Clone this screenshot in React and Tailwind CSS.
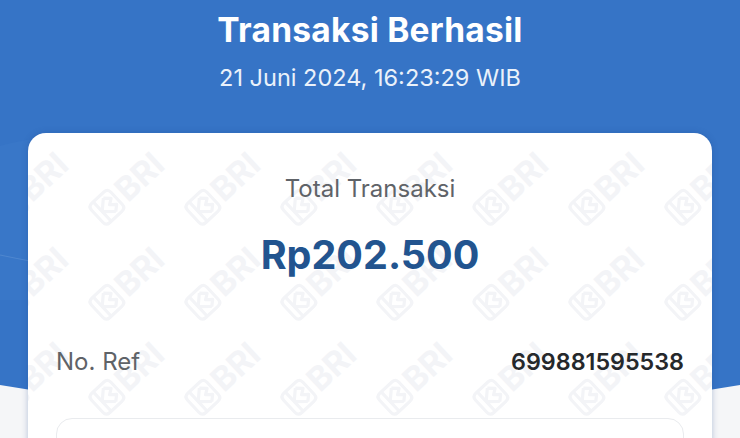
import React from 'react';

const BriMark = () => (
  <div className="flex w-[100px] shrink-0 -rotate-[43deg] items-center justify-center gap-[3px] text-[#f3f4f7]">
    <svg className="shrink-0" width="31" height="31" viewBox="0 0 34 34" fill="none" stroke="currentColor" strokeWidth="3.5" strokeLinejoin="round">
      <path d="M8 2.5H26Q31.5 2.5 31.5 8V26Q31.5 31.5 26 31.5H8Q2.5 31.5 2.5 26V8Q2.5 2.5 8 2.5Z" />
      <path d="M10 2.5V31.5M10 17L21 7M10 17L21 27M21 7L27 13L21 17L27 22L21 27" />
    </svg>
    <span className="text-[33px] font-bold leading-none">BRI</span>
  </div>
);

const Watermark = () => (
  <div className="absolute left-[-45px] top-[-87px] grid grid-cols-[repeat(8,96px)] auto-rows-[95px]">
    {Array.from({ length: 32 }).map((_, i) => (
      <div key={i} className="flex items-center justify-center">
        <BriMark />
      </div>
    ))}
  </div>
);

const App = () => {
  return (
    <div className="relative h-[438px] w-[740px] overflow-hidden bg-[#f5f6f8] font-['Inter',sans-serif]">
      <svg className="absolute inset-0" width="740" height="438" viewBox="0 0 740 438">
        <path d="M0 0H740V385Q370 450 0 385Z" fill="#3674c6" />
        <path d="M0 146Q20 140 60 135V300H0V255Z" fill="#3977c8" />
        <path d="M0 255Q14 258 30 261" fill="none" stroke="#4f87cf" strokeWidth="1.2" />
      </svg>

      <div className="relative flex flex-col items-center">
        <h1 className="mt-[10px] text-[33.5px] font-bold leading-[40px] tracking-[0.25px] text-white">Transaksi Berhasil</h1>
        <p className="mt-[10px] text-[23.5px] leading-[36px] text-[#eaf1fa]">21 Juni 2024, 16:23:29 WIB</p>

        <div className="relative mt-[37px] h-[400px] w-[684px] overflow-hidden rounded-[18px] bg-white shadow-[0_0_6px_rgba(30,70,140,0.3)]">
          <Watermark />
          <div className="relative flex flex-col px-7">
            <p className="mt-[42px] text-center text-[24px] leading-7 text-[#5f6368]">Total Transaksi</p>
            <p className="mt-[28px] text-center text-[39.5px] font-bold leading-[48px] text-[#22548f]">Rp202.500</p>
            <div className="mt-[67px] flex items-center justify-between">
              <span className="text-[24px] leading-8 text-[#5f6368]">No. Ref</span>
              <span className="text-[23.3px] font-semibold leading-8 text-[#25282b]">699881595538</span>
            </div>
            <div className="mt-[40px] h-[120px] rounded-[16px] border-[1.5px] border-[#e9ebee]" />
          </div>
        </div>
      </div>
    </div>
  );
};

export default App;
